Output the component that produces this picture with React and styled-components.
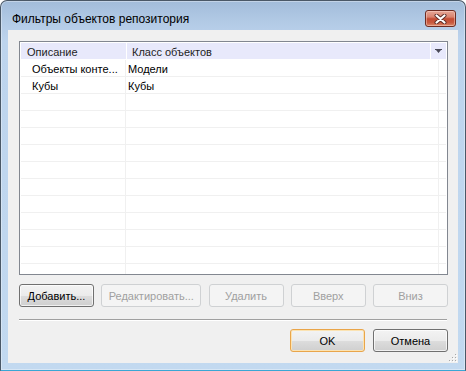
import React from 'react';
import styled, { createGlobalStyle } from 'styled-components';

const Global = createGlobalStyle`
  html, body { margin: 0; padding: 0; background: #ffffff; }
  body { font-family: "Liberation Sans", Arial, sans-serif; }
  #root { width: 466px; height: 371px; }
`;

const Window = styled.div`
  box-sizing: border-box;
  width: 466px;
  height: 371px;
  border: 1px solid #4a5867;
  border-bottom-color: #3aa6d4;
  border-radius: 7px 7px 0 0;
  background: linear-gradient(to bottom, #a2bcda 0px, #b3cbe6 22px, #bdd4ed 40px, #c2d9f0 100%);
  box-shadow: inset 0 0 0 1px rgba(255, 255, 255, 0.35);
  display: flex;
  flex-direction: column;
  padding: 0 7px 7px 7px;
`;

const TitleBar = styled.div`
  height: 29px;
  display: flex;
  align-items: flex-start;
  justify-content: space-between;
`;

const Title = styled.div`
  padding: 11px 0 0 4px;
  font-size: 12px;
  line-height: 15px;
  color: #000;
`;

const CloseButton = styled.div`
  box-sizing: border-box;
  width: 31px;
  height: 17px;
  margin: 9px 2px 0 0;
  border: 1px solid #6d2c22;
  border-radius: 3px;
  background: linear-gradient(to bottom, #e6a797 0%, #d9836f 40%, #c34b33 52%, #c85a40 78%, #dc8a6c 100%);
  box-shadow: inset 0 0 0 1px rgba(255, 220, 210, 0.45);
  display: flex;
  align-items: center;
  justify-content: center;
`;

const Client = styled.div`
  position: relative;
  flex: 1;
  background: #f0f0f0;
  padding: 11px 10px 0 11px;
  display: flex;
  flex-direction: column;
`;

const Table = styled.div`
  box-sizing: border-box;
  height: 234px;
  border: 1px solid #828790;
  padding: 1px;
  background: #ffffff;
  display: flex;
  flex-direction: column;
  overflow: hidden;
`;

const Header = styled.div`
  display: grid;
  grid-template-columns: 105px 303px 15px;
  column-gap: 1px;
  height: 16px;
  border-bottom: 1px solid #ffffff;
  flex: none;
`;

const HeaderCell = styled.div`
  background: #e8e9fb;
  font-size: 11px;
  line-height: 16px;
  padding: 1px 0 0 ${(p) => p.$pad}px;
  color: #1e1e1e;
  white-space: nowrap;
  overflow: hidden;
  display: flex;
  justify-content: ${(p) => (p.$center ? 'center' : 'flex-start')};
  align-items: ${(p) => (p.$center ? 'center' : 'stretch')};
  box-sizing: border-box;
`;

const Row = styled.div`
  display: grid;
  grid-template-columns: 105px 313px 1fr;
  height: 17px;
  box-sizing: border-box;
  border-bottom: 1px solid #f0f0f0;
  flex: none;
`;

const Cell = styled.div`
  box-sizing: border-box;
  padding-left: ${(p) => p.$pad}px;
  border-right: ${(p) => (p.$last ? 'none' : '1px solid #f0f0f0')};
  font-size: 11px;
  line-height: 18px;
  color: #000;
  white-space: nowrap;
`;

const ButtonRow = styled.div`
  display: flex;
  justify-content: space-between;
  margin-top: 9px;
`;

const Button = styled.div`
  box-sizing: border-box;
  width: ${(p) => p.$w}px;
  height: 23px;
  border: 1px solid ${(p) => (p.$disabled ? '#cfd1d3' : p.$default ? '#e9a54a' : '#707070')};
  border-radius: 3px;
  background: ${(p) =>
    p.$disabled
      ? '#f4f4f4'
      : 'linear-gradient(to bottom, #f3f3f3 0%, #ebebeb 50%, #dddddd 51%, #cfcfcf 100%)'};
  box-shadow: ${(p) =>
    p.$disabled ? 'none' : p.$default ? 'inset 0 0 0 1px #fbe3b3' : 'inset 0 0 0 1px rgba(255,255,255,0.7)'};
  color: ${(p) => (p.$disabled ? '#a0a0a0' : '#000')};
  font-size: 11px;
  display: flex;
  align-items: center;
  justify-content: center;
  padding-top: 1px;
`;

const Separator = styled.div`
  height: 1px;
  background: #a0a0a0;
  border-bottom: 1px solid #ffffff;
  margin-top: 12px;
  margin-right: 1px;
`;

const DialogButtons = styled.div`
  display: flex;
  justify-content: flex-end;
  gap: 8px;
  margin-top: 8px;
`;

const Grip = styled.svg`
  position: absolute;
  right: 1px;
  bottom: 1px;
`;

const rows = [
  ['Объекты конте...', 'Модели'],
  ['Кубы', 'Кубы'],
];

export default function App() {
  const allRows = [...rows];
  while (allRows.length < 13) allRows.push(['', '']);
  return (
    <>
      <Global />
      <Window>
        <TitleBar>
          <Title>Фильтры объектов репозитория</Title>
          <CloseButton>
            <svg width="13" height="10" viewBox="0 0 13 10">
              <path d="M2.5 1.5 L10.5 8.5 M10.5 1.5 L2.5 8.5" stroke="#5a2a24" strokeWidth="4" strokeLinecap="round" />
              <path d="M2.5 1.5 L10.5 8.5 M10.5 1.5 L2.5 8.5" stroke="#ffffff" strokeWidth="2.2" strokeLinecap="round" />
            </svg>
          </CloseButton>
        </TitleBar>
        <Client>
          <Table>
            <Header>
              <HeaderCell $pad={6}>Описание</HeaderCell>
              <HeaderCell $pad={5}>Класс объектов</HeaderCell>
              <HeaderCell $pad={0} $center>
                <svg width="7" height="5" viewBox="0 0 7 5">
                  <path d="M0 0 H7 V1 H6 L3.5 4 L1 1 H0 Z" fill="#4a4a58" />
                </svg>
              </HeaderCell>
            </Header>
            {allRows.map((r, i) => (
              <Row key={i}>
                <Cell $pad={11}>{r[0]}</Cell>
                <Cell $pad={2}>{r[1]}</Cell>
                <Cell $last />
              </Row>
            ))}
          </Table>
          <ButtonRow>
            <Button $w={75}>Добавить...</Button>
            <Button $w={100} $disabled>Редактировать...</Button>
            <Button $w={75} $disabled>Удалить</Button>
            <Button $w={75} $disabled>Вверх</Button>
            <Button $w={75} $disabled>Вниз</Button>
          </ButtonRow>
          <Separator />
          <DialogButtons>
            <Button $w={75} $default>OK</Button>
            <Button $w={75}>Отмена</Button>
          </DialogButtons>
          <Grip width="9" height="9" viewBox="0 0 9 9">
            {[[7, 1], [4, 4], [7, 4], [1, 7], [4, 7], [7, 7]].map(([x, y], i) => (
              <g key={i}>
                <rect x={x + 1} y={y + 1} width="1" height="1" fill="#ffffff" />
                <rect x={x} y={y} width="1" height="1" fill="#a8a8a8" />
              </g>
            ))}
          </Grip>
        </Client>
      </Window>
    </>
  );
}
